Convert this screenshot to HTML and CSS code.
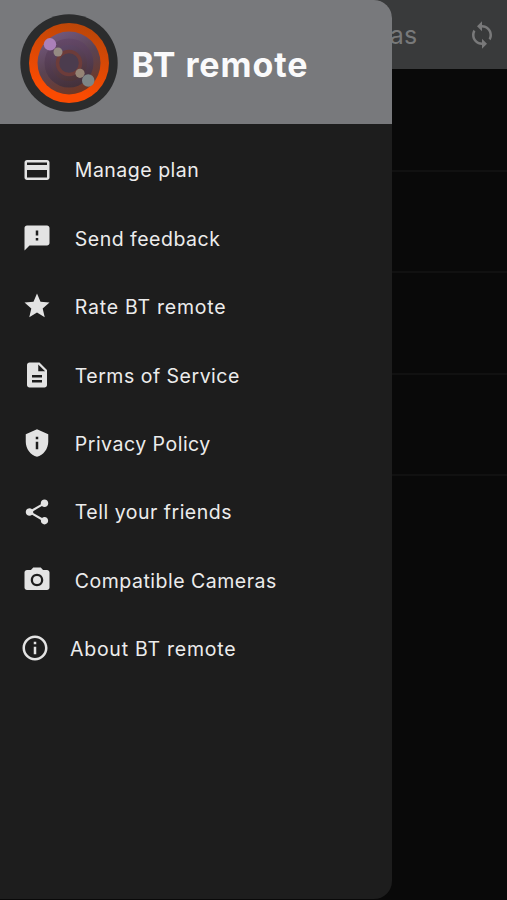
FILE: index.html
```html
<!DOCTYPE html>
<html lang="en">
<head>
<meta charset="utf-8">
<title>BT remote</title>
<link rel="stylesheet" href="styles.css">
</head>
<body>
<div class="screen">
  <main class="page">
    <header class="appbar">
      <span class="appbar-title">as</span>
      <svg class="sync" viewBox="0 0 24 24"><path d="M12 4V1L8 5l4 4V6c3.31 0 6 2.69 6 6 0 1.01-.25 1.97-.7 2.8l1.46 1.46C19.54 15.03 20 13.57 20 12c0-4.42-3.58-8-8-8zm0 14c-3.31 0-6-2.69-6-6 0-1.01.25-1.97.7-2.8L5.24 7.74C4.46 8.97 4 10.43 4 12c0 4.42 3.58 8 8 8v3l4-4-4-4v3z"/></svg>
    </header>
    <div class="row"></div>
    <div class="row"></div>
    <div class="row"></div>
    <div class="row"></div>
  </main>
  <aside class="drawer">
    <header class="drawer-head">
      <svg class="logo" viewBox="0 0 98 98">
        <defs>
          <linearGradient id="ring" x1="0.7" y1="0" x2="0.45" y2="0.85"><stop offset="0" stop-color="#b94608"/><stop offset="1" stop-color="#fa4b02"/></linearGradient>
          <linearGradient id="lens" x1="0.2" y1="0" x2="0.65" y2="1"><stop offset="0" stop-color="#755a82"/><stop offset="0.5" stop-color="#5a4352"/><stop offset="1" stop-color="#713722"/></linearGradient>
          <linearGradient id="inner" x1="0.3" y1="0" x2="0.5" y2="1"><stop offset="0" stop-color="#65496a"/><stop offset="1" stop-color="#44313a"/></linearGradient>
          <linearGradient id="middle" x1="0.3" y1="0" x2="0.6" y2="1"><stop offset="0" stop-color="#5d4768"/><stop offset="1" stop-color="#4d3335"/></linearGradient>
        </defs>
        <circle cx="49" cy="49" r="48.7" fill="#2b2c2d"/>
        <circle cx="49" cy="49" r="40" fill="url(#ring)"/>
        <circle cx="49" cy="49" r="31.5" fill="url(#lens)"/>
        <circle cx="49" cy="49" r="24.5" fill="url(#inner)"/>
        <circle cx="49" cy="49" r="18" fill="url(#middle)"/>
        <circle cx="49" cy="49" r="11.5" fill="#4b3c4e" stroke="#6d3c3a" stroke-width="3.5"/>
        <circle cx="30" cy="30.3" r="6.2" fill="#ab80b9"/>
        <circle cx="38" cy="38" r="4.5" fill="#958b83"/>
        <circle cx="60" cy="59.3" r="4.6" fill="#958475"/>
        <circle cx="68.2" cy="66.5" r="6.2" fill="#7d8586"/>
      </svg>
      <h1>BT remote</h1>
    </header>
    <nav class="menu">
      <a class="item"><svg viewBox="0 0 24 24"><path d="M20 4H4c-1.11 0-1.99.89-1.99 2L2 18c0 1.11.89 2 2 2h16c1.11 0 2-.89 2-2V6c0-1.11-.89-2-2-2zm0 14H4v-6h16v6zm0-10H4V6h16v2z"/></svg><span>Manage plan</span></a>
      <a class="item"><svg viewBox="0 0 24 24"><path d="M20 2H4c-1.1 0-1.99.9-1.99 2L2 22l4-4h14c1.1 0 2-.9 2-2V4c0-1.1-.9-2-2-2zm-7 12h-2v-2h2v2zm0-4h-2V6h2v4z"/></svg><span>Send feedback</span></a>
      <a class="item brand"><svg viewBox="0 0 24 24"><path d="M12 17.27L18.18 21l-1.64-7.03L22 9.24l-7.19-.61L12 2 9.19 8.63 2 9.24l5.46 4.73L5.82 21z"/></svg><span>Rate BT remote</span></a>
      <a class="item"><svg viewBox="0 0 24 24"><path d="M14 2H6c-1.1 0-1.99.9-1.99 2L4 20c0 1.1.89 2 1.99 2H18c1.1 0 2-.9 2-2V8l-6-6zm2 16H8v-2h8v2zm0-4H8v-2h8v2zm-3-5V3.5L18.5 9H13z"/></svg><span>Terms of Service</span></a>
      <a class="item"><svg viewBox="0 0 24 24"><path d="M12 1L3 5v6c0 5.55 3.84 10.74 9 12 5.160-1.260 9-6.450 9-12V5l-9-4zm1 16h-2v-6h2v6zm0-8h-2V7h2v2z"/></svg><span>Privacy Policy</span></a>
      <a class="item"><svg viewBox="0 0 24 24"><path d="M18 16.080c-.76 0-1.440.3-1.960.77L8.910 12.700c.05-.23.09-.46.09-.7s-.04-.47-.09-.7l7.050-4.110c.54.5 1.250.81 2.040.81 1.660 0 3-1.340 3-3s-1.340-3-3-3-3 1.340-3 3c0 .24.04.47.09.7L8.040 9.810C7.500 9.310 6.790 9 6 9c-1.660 0-3 1.340-3 3s1.340 3 3 3c.79 0 1.500-.31 2.040-.81l7.120 4.160c-.05.21-.08.43-.08.65 0 1.610 1.310 2.920 2.920 2.920s2.920-1.310 2.920-2.920-1.310-2.920-2.920-2.920z"/></svg><span>Tell your friends</span></a>
      <a class="item"><svg viewBox="0 0 24 24"><circle cx="12" cy="12" r="3.2"/><path d="M9 2L7.170 4H4c-1.100 0-2 .9-2 2v12c0 1.100.9 2 2 2h16c1.100 0 2-.9 2-2V6c0-1.100-.9-2-2-2h-3.170L15 2H9zm3 15c-2.760 0-5-2.240-5-5s2.240-5 5-5 5 2.240 5 5-2.240 5-5 5z"/></svg><span>Compatible Cameras</span></a>
      <a class="item brand about"><svg viewBox="0 0 24 24"><path d="M11 7h2v2h-2zm0 4h2v6h-2zm1-9C6.480 2 2 6.480 2 12s4.480 10 10 10 10-4.480 10-10S17.520 2 12 2zm0 18c-4.410 0-8-3.590-8-8s3.590-8 8-8 8 3.590 8 8-3.590 8-8 8z"/></svg><span>About BT remote</span></a>
    </nav>
  </aside>
</div>
</body>
</html>
```
FILE: styles.css
```css
* { box-sizing: border-box; }
body { margin: 0; background: #090909; font-family: Inter, "Liberation Sans", sans-serif; }
.screen { position: relative; width: 507px; height: 900px; overflow: hidden; background: #090909; }
.page { display: flex; flex-direction: column; }
.appbar { height: 69px; margin-bottom: 1.5px; background: #393a3b; display: flex; align-items: center; justify-content: flex-end; padding: 1px 10px 0 0; }
.appbar-title { font-size: 25px; line-height: 30px; color: #78797a; margin-right: 49.5px; letter-spacing: 0.3px; }
.sync { width: 30px; height: 30px; fill: #79797a; }
.row { height: 101.4px; border-bottom: 2px solid #111; }
.drawer { position: absolute; left: 0; top: 0; width: 392px; height: 899px; background: #1d1d1d; border-radius: 0 18px 18px 0; overflow: hidden; }
.drawer-head { height: 124px; background: #78797c; display: flex; align-items: center; padding: 2px 0 0 20.4px; }
.logo { width: 98px; height: 98px; }
h1 { margin: 3px 0 0 13px; font-size: 34px; line-height: 42px; font-weight: 700; letter-spacing: 0.9px; color: #fafafb; white-space: nowrap; }
.menu { padding-top: 11.4px; }
.item { height: 68.4px; display: flex; align-items: center; padding-left: 22.4px; gap: 22.4px; color: #ececec; font-size: 19.5px; font-weight: 400; letter-spacing: 0.5px; white-space: nowrap; }
.item svg { width: 30px; height: 30px; fill: #e3e3e3; }
.item span { padding-top: 1.5px; }
.brand { letter-spacing: 0.76px; }
.about { padding-left: 20px; gap: 20px; }
```
